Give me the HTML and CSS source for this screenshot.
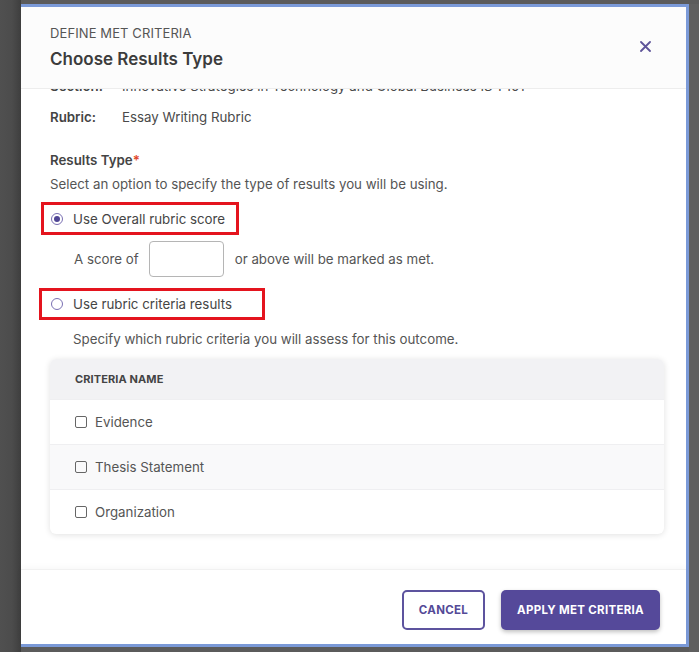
FILE: index.html
```html
<!DOCTYPE html>
<html lang="en">
<head>
<meta charset="utf-8">
<title>Define Met Criteria</title>
<link rel="stylesheet" href="styles.css">
</head>
<body>
<div class="screen">
  <div class="backdrop-left"></div>
  <div class="modal">
    <div class="modal-header">
      <div class="titles">
        <div class="eyebrow">DEFINE MET CRITERIA</div>
        <div class="title">Choose Results Type</div>
      </div>
      <button class="close" aria-label="Close">
        <svg width="11" height="11" viewBox="0 0 11 11"><path d="M1 1L10 10M10 1L1 10" stroke="#5e5499" stroke-width="1.8" stroke-linecap="round"/></svg>
      </button>
    </div>
    <div class="modal-body">
      <div class="meta-row meta-cut"><span class="meta-key">Section:</span><span class="meta-val">Innovative Strategies in Technology and Global Business IS 1 101</span></div>
      <div class="meta-row meta-rubric"><span class="meta-key">Rubric:</span><span class="meta-val">Essay Writing Rubric</span></div>
      <div class="field-label">Results Type<span class="req">*</span></div>
      <div class="help">Select an option to specify the type of results you will be using.</div>
      <div class="option option-one">
        <span class="radio checked"></span>
        <span class="option-text">Use Overall rubric score</span>
      </div>
      <div class="score-row">
        <span>A score of</span>
        <span class="score-input"></span>
        <span>or above will be marked as met.</span>
      </div>
      <div class="option option-two">
        <span class="radio"></span>
        <span class="option-text">Use rubric criteria results</span>
      </div>
      <div class="help indent">Specify which rubric criteria you will assess for this outcome.</div>
      <div class="table-card">
        <div class="table-head">CRITERIA NAME</div>
        <div class="table-row"><span class="checkbox"></span>Evidence</div>
        <div class="table-row alt"><span class="checkbox"></span>Thesis Statement</div>
        <div class="table-row"><span class="checkbox"></span>Organization</div>
      </div>
    </div>
    <div class="modal-footer">
      <button class="btn btn-outline">CANCEL</button>
      <button class="btn btn-primary">APPLY MET CRITERIA</button>
    </div>
  </div>
  <div class="backdrop-right"></div>
</div>
</body>
</html>
```
FILE: styles.css
```css
html, body {
  margin: 0;
  padding: 0;
  background: #5a5a5a;
  font-family: Inter, "Noto Sans", sans-serif;
}
.screen {
  display: flex;
  width: 699px;
  height: 652px;
  padding-top: 4px;
  box-sizing: border-box;
  background: #5b5b5b;
}
.backdrop-left {
  width: 21px;
  flex: none;
  margin-top: -4px;
  height: 652px;
  background: linear-gradient(to right, #505050 0, #4c4c4c 12px, #3e3e3e 21px);
}
.backdrop-right {
  flex: 1;
  background: #5f5f5f;
}
.modal {
  width: 668px;
  height: 643px;
  box-sizing: border-box;
  border-top: 3px solid #7b9ad8;
  border-right: 3px solid #7b9ad8;
  border-bottom: 3px solid #7b9ad8;
  background: #fff;
  display: flex;
  flex-direction: column;
}
.modal-header {
  height: 82px;
  flex: none;
  box-sizing: border-box;
  padding: 16px 35px 0 29px;
  display: flex;
  justify-content: space-between;
  align-items: flex-start;
  background: #fcfcfc;
  border-bottom: 1px solid #ededed;
  position: relative;
  z-index: 1;
}
.eyebrow {
  font-size: 13px;
  color: #555;
  line-height: 20px;
  letter-spacing: 0.1px;
}
.title {
  font-size: 17px;
  font-weight: 600;
  color: #3c3c3c;
  line-height: 24px;
  margin-top: 4px;
}
.close {
  border: none;
  background: none;
  padding: 0;
  margin-top: 18px;
  width: 11px;
  height: 11px;
  display: flex;
}
.modal-body {
  flex: 1;
  overflow: hidden;
  padding: 2px 22px 0 29px;
  font-size: 13.3px;
  color: #4a4a4a;
}
.meta-row {
  line-height: 20px;
  display: flex;
}
.meta-key {
  width: 72px;
  font-weight: 600;
  color: #444;
}
.meta-val {
  color: #4a4a4a;
}
.meta-cut {
  margin-top: -15px;
  white-space: nowrap;
}
.meta-rubric {
  margin-top: 11px;
}
.field-label {
  margin-top: 23px;
  line-height: 20px;
  font-weight: 600;
  color: #444;
}
.req {
  color: #e0452a;
}
.help {
  margin-top: 4px;
  line-height: 20px;
  color: #555;
}
.help.indent {
  margin-left: 23px;
  margin-top: 9px;
}
.option {
  display: flex;
  align-items: center;
  gap: 10px;
  box-sizing: border-box;
  border: 3px solid #e4141e;
}
.option-one {
  margin-top: 8px;
  margin-left: -9px;
  width: 198px;
  height: 33px;
  padding-left: 7px;
}
.option-two {
  margin-top: 11px;
  margin-left: -11px;
  width: 226px;
  height: 32px;
  padding-left: 9px;
}
.option-text {
  color: #454545;
  font-size: 13.3px;
}
.radio {
  width: 12px;
  height: 12px;
  box-sizing: border-box;
  border: 1.5px solid #7a70b3;
  border-radius: 50%;
  display: flex;
  align-items: center;
  justify-content: center;
  flex: none;
}
.radio.checked::after {
  content: "";
  width: 6px;
  height: 6px;
  border-radius: 50%;
  background: #4f4594;
}
.score-row {
  margin-top: 6px;
  margin-left: 24px;
  display: flex;
  align-items: center;
  color: #555;
}
.score-input {
  width: 75px;
  height: 36px;
  box-sizing: border-box;
  border: 1px solid #b5b5b5;
  border-radius: 4px;
  margin: 0 11px 0 10px;
}
.table-card {
  margin-top: 10px;
  border-radius: 6px;
  background: #fff;
  box-shadow: 0 1px 6px rgba(0, 0, 0, 0.12);
  overflow: hidden;
}
.table-head {
  height: 40px;
  background: #f2f2f4;
  display: flex;
  align-items: center;
  padding-left: 25px;
  font-size: 11px;
  font-weight: 700;
  color: #444;
  letter-spacing: 0.1px;
}
.table-row {
  height: 45px;
  box-sizing: border-box;
  border-top: 1px solid #efeff1;
  display: flex;
  align-items: center;
  padding-left: 25px;
  gap: 8px;
  color: #555;
  font-size: 13.3px;
}
.table-row.alt {
  background: #f9f9fa;
}
.checkbox {
  width: 12px;
  height: 12px;
  box-sizing: border-box;
  border: 1.5px solid #666;
  border-radius: 2px;
  flex: none;
}
.modal-footer {
  height: 75px;
  flex: none;
  box-sizing: border-box;
  padding: 20px 26px 15px 0;
  display: flex;
  justify-content: flex-end;
  gap: 16px;
  border-top: 1px solid #f1f1f1;
  box-shadow: 0 -2px 6px rgba(0, 0, 0, 0.03);
}
.btn {
  height: 40px;
  border-radius: 5px;
  font-family: Inter, "Noto Sans", sans-serif;
  font-size: 11.5px;
  font-weight: 700;
  letter-spacing: 0.3px;
  cursor: pointer;
}
.btn-outline {
  width: 83px;
  background: #fff;
  border: 2px solid #5d539e;
  color: #544a97;
}
.btn-primary {
  width: 159px;
  background: #55499a;
  border: none;
  color: #fff;
  box-shadow: 0 2px 4px rgba(0, 0, 0, 0.25);
}
```
